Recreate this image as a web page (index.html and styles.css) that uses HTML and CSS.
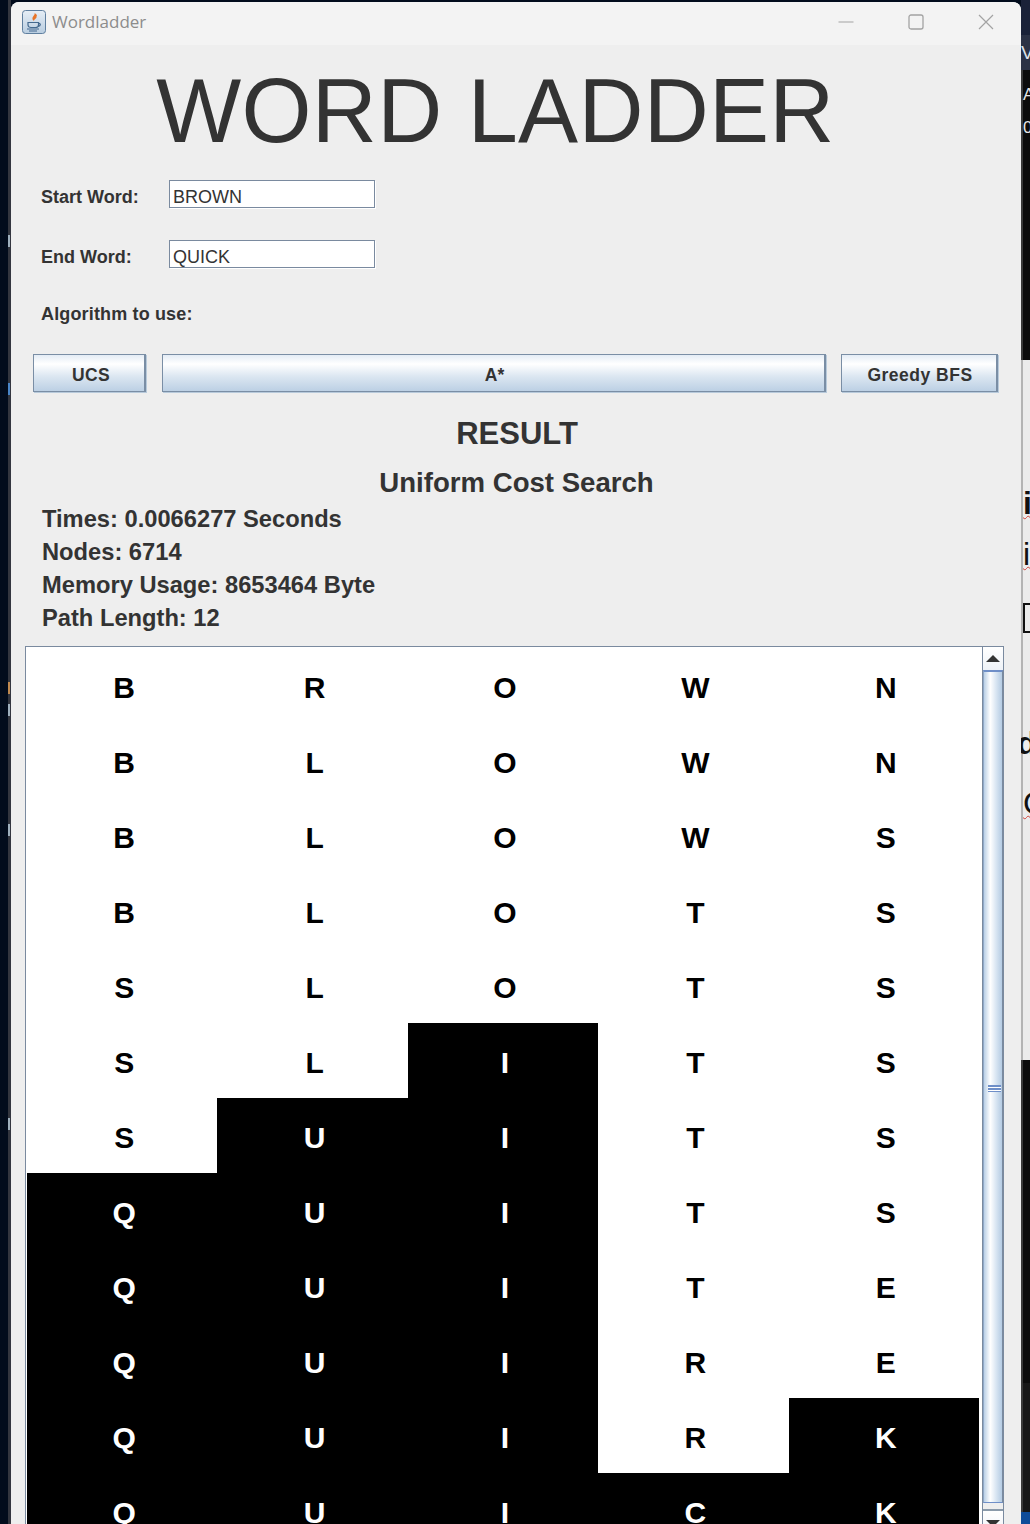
FILE: index.html
```html
<!doctype html>
<html lang="en">
<head>
  <meta charset="UTF-8">
  <title>Wordladder</title>
  <link rel="stylesheet" href="styles.css">
</head>
<body>
  <div class="desktop-left">
    <span class="edge-mark mark-a"></span>
    <span class="edge-mark mark-b"></span>
    <span class="edge-mark mark-c"></span>
    <span class="edge-mark mark-d"></span>
    <span class="edge-mark mark-e"></span>
    <span class="edge-mark mark-f"></span>
  </div>
  <div class="window">
    <div class="titlebar">
      <svg class="app-icon" width="24" height="24" viewBox="0 0 24 24">
        <defs>
          <linearGradient id="iconbg" x1="0" y1="0" x2="0" y2="1">
            <stop offset="0" stop-color="#e6eef6"/>
            <stop offset="1" stop-color="#b9cde0"/>
          </linearGradient>
        </defs>
        <rect x="0.5" y="0.5" width="23" height="23" rx="3" fill="url(#iconbg)" stroke="#5f7f9f"/>
        <path d="M12.5 3c1 2-2.500 3.500-2 6 .2 1 1 1.500 1.500 2-.2-1.500 3.500-3 2.500-5 1 0 .5-2-2-3z" fill="#e8752a"/>
        <path d="M6 12.500h10.500v2.500c0 1.500-1.500 2.500-3 2.500h-4.500c-1.500 0-3-1-3-2.500z" fill="none" stroke="#44698f" stroke-width="1.200"/>
        <path d="M16.500 13.500c2.500-.5 2.500 2.500-.5 3M5 19h12M7 21h8" fill="none" stroke="#44698f" stroke-width="1.200"/>
      </svg>
      <span class="app-name">Wordladder</span>
      <div class="window-controls">
        <svg width="16" height="16" viewBox="0 0 16 16"><path d="M0.500 8h15" stroke="#a3a3a3" fill="none"/></svg>
        <svg width="16" height="16" viewBox="0 0 16 16"><rect x="1" y="1" width="14" height="14" rx="2" stroke="#a3a3a3" stroke-width="1.300" fill="none"/></svg>
        <svg width="16" height="16" viewBox="0 0 16 16"><path d="M1 1l14 14M15 1L1 15" stroke="#a3a3a3" stroke-width="1.200" fill="none"/></svg>
      </div>
    </div>

    <div class="content">
      <h1 class="app-title">WORD LADDER</h1>

      <div class="field-row">
        <label class="field-label">Start Word:</label>
        <div class="text-input">BROWN</div>
      </div>
      <div class="field-row">
        <label class="field-label">End Word:</label>
        <div class="text-input">QUICK</div>
      </div>
      <div class="algo-label">Algorithm to use:</div>

      <div class="button-row">
        <button class="algo-btn btn-ucs">UCS</button>
        <button class="algo-btn btn-astar">A*</button>
        <button class="algo-btn btn-greedy">Greedy BFS</button>
      </div>

      <h2 class="result-title">RESULT</h2>
      <h3 class="result-algo">Uniform Cost Search</h3>
      <div class="stats">
        <div>Times: 0.0066277 Seconds</div>
        <div>Nodes: 6714</div>
        <div>Memory Usage: 8653464 Byte</div>
        <div>Path Length: 12</div>
      </div>

      <div class="path-panel">
        <div class="path-grid">
          <div class="cell">B</div><div class="cell">R</div><div class="cell">O</div><div class="cell">W</div><div class="cell">N</div>
          <div class="cell">B</div><div class="cell">L</div><div class="cell">O</div><div class="cell">W</div><div class="cell">N</div>
          <div class="cell">B</div><div class="cell">L</div><div class="cell">O</div><div class="cell">W</div><div class="cell">S</div>
          <div class="cell">B</div><div class="cell">L</div><div class="cell">O</div><div class="cell">T</div><div class="cell">S</div>
          <div class="cell">S</div><div class="cell">L</div><div class="cell">O</div><div class="cell">T</div><div class="cell">S</div>
          <div class="cell">S</div><div class="cell">L</div><div class="cell on">I</div><div class="cell">T</div><div class="cell">S</div>
          <div class="cell">S</div><div class="cell on">U</div><div class="cell on">I</div><div class="cell">T</div><div class="cell">S</div>
          <div class="cell on">Q</div><div class="cell on">U</div><div class="cell on">I</div><div class="cell">T</div><div class="cell">S</div>
          <div class="cell on">Q</div><div class="cell on">U</div><div class="cell on">I</div><div class="cell">T</div><div class="cell">E</div>
          <div class="cell on">Q</div><div class="cell on">U</div><div class="cell on">I</div><div class="cell">R</div><div class="cell">E</div>
          <div class="cell on">Q</div><div class="cell on">U</div><div class="cell on">I</div><div class="cell">R</div><div class="cell on">K</div>
          <div class="cell on">Q</div><div class="cell on">U</div><div class="cell on">I</div><div class="cell on">C</div><div class="cell on">K</div>
        </div>
        <div class="scrollbar">
          <div class="scroll-btn">
            <svg width="16" height="8" viewBox="0 0 16 8"><path d="M8 0l7 7H1z" fill="#333"/></svg>
          </div>
          <div class="scroll-thumb">
            <span class="grip"></span>
          </div>
          <div class="scroll-btn scroll-btn-down">
            <svg width="16" height="8" viewBox="0 0 16 8"><path d="M8 8L1 1h14z" fill="#333"/></svg>
          </div>
        </div>
      </div>
    </div>
  </div>
  <div class="desktop-right">
    <div class="strip-navy"></div>
    <div class="strip-slate">V</div>
    <div class="strip-black">A<br>0</div>
    <div class="strip-doc">
      <span class="doc-glyph doc-i1">i</span>
      <span class="doc-glyph doc-i2">i</span>
      <span class="doc-box"></span>
      <span class="doc-glyph doc-d">d</span>
      <span class="doc-glyph doc-c">C</span>
    </div>
    <div class="strip-dark"></div>
    <div class="strip-dark2"></div>
    <div class="strip-blue"></div>
  </div>
</body>
</html>
```

FILE: styles.css
```css
html, body {
  margin: 0;
  height: 1524px;
  overflow: hidden;
}
body {
  display: flex;
  background: #020c1c;
  font-family: 'Liberation Sans', Arial, sans-serif;
  color: #333;
}
.desktop-left {
  position: relative;
  width: 8px;
  flex: none;
  border-right: 3px solid #33363f;
}
.edge-mark {
  position: absolute;
  left: 8px;
  width: 2px;
  height: 12px;
  background: #9fb0bd;
}
.mark-a { top: 235px; }
.mark-b { top: 383px; background: #4a86c8; }
.mark-c { top: 682px; background: #c08a50; }
.mark-d { top: 704px; }
.mark-e { top: 824px; }
.mark-f { top: 1118px; }

.window {
  width: 1010px;
  flex: none;
  margin-top: 2px;
  border-radius: 8px 8px 0 0;
  overflow: hidden;
  background: #eeeeee;
}
.titlebar {
  display: flex;
  align-items: center;
  box-sizing: border-box;
  height: 43px;
  background: #f3f3f3;
  padding: 0 0 4px 11px;
}
.app-icon {
  margin-right: 6px;
}
.app-name {
  font-family: 'Open Sans', sans-serif;
  font-size: 17px;
  color: #8c8c8c;
}
.window-controls {
  margin-left: auto;
  margin-right: 27px;
  display: flex;
  gap: 54px;
}

.content {
  padding: 0 0 0 15px;
}
.app-title {
  margin: 22px 0 0;
  width: 939px;
  text-align: center;
  font-size: 90px;
  font-weight: normal;
  line-height: 88px;
  color: #333;
  letter-spacing: 0.3px;
}
.field-row {
  display: flex;
  align-items: center;
  height: 28px;
  margin: 0 0 32px 15px;
}
.app-title + .field-row {
  margin-top: 25px;
}
.field-label {
  width: 128px;
  padding-top: 7px;
  font-size: 18px;
  font-weight: bold;
}
.text-input {
  height: 26px;
  line-height: 33px;
  padding-left: 3px;
  background: #fff;
  border: 1px solid #7a8a9f;
  box-shadow: 1px 1px 0 #fff;
  font-size: 18px;
  width: 201px;
  overflow: hidden;
}
.algo-label {
  margin: -1px 0 0 15px;
  height: 28px;
  line-height: 30px;
  font-size: 18px;
  font-weight: bold;
  letter-spacing: 0.15px;
}
.button-row {
  display: flex;
  gap: 16px;
  margin: 27px 0 0 7px;
  width: 965px;
}
.algo-btn {
  height: 38px;
  padding: 4px 0 0 2px;
  border: 1px solid #7a8ea5;
  border-right-width: 2px;
  box-shadow: 1px 1px 0 #b8cadb;
  background: linear-gradient(#e4ecf5 0%, #ffffff 25%, #dbe6f1 60%, #bcd0e4 100%);
  font-family: 'Liberation Sans', Arial, sans-serif;
  font-size: 17.500px;
  font-weight: bold;
  color: #333;
}
.btn-ucs { width: 113px; flex: none; padding-left: 4px; letter-spacing: 0.4px; }
.btn-astar { flex: 1; }
.btn-greedy { width: 157px; flex: none; margin-left: -1px; letter-spacing: 0.5px; }

.result-title {
  margin: 23px 0 0;
  width: 982px;
  text-align: center;
  font-size: 31px;
  line-height: 38px;
  font-weight: bold;
}
.result-algo {
  margin: 14px 0 0;
  width: 981px;
  text-align: center;
  font-size: 27.600px;
  line-height: 32px;
  font-weight: bold;
}
.stats {
  margin: 4px 0 0 16px;
  font-size: 23.700px;
  font-weight: bold;
  line-height: 33px;
}
.path-panel {
  display: flex;
  width: 977px;
  height: 900px;
  margin: 11px 0 0 -1px;
  border: 1px solid #7a8a9f;
  background: #fff;
}
.path-grid {
  display: grid;
  grid-template-columns: repeat(5, 190.4px);
  grid-auto-rows: 75px;
  width: 952px;
  padding: 1px 0 0 1px;
  align-content: start;
}
.cell {
  display: flex;
  align-items: center;
  justify-content: center;
  padding-left: 4px;
  padding-top: 5px;
  box-sizing: border-box;
  font-size: 30px;
  font-weight: bold;
  color: #000;
}
.cell.on {
  background: #000;
  color: #fff;
}
.scrollbar {
  width: 21px;
  margin-left: 3px;
  border-left: 1px solid #7a8a9f;
  background: #eeeeee;
}
.scroll-btn {
  display: flex;
  align-items: center;
  justify-content: center;
  height: 23px;
  background: linear-gradient(#ffffff, #eef2f7);
}
.scroll-thumb {
  position: relative;
  box-sizing: border-box;
  height: 833px;
  border-top: 2px solid #6f8fc8;
  border-bottom: 1px solid #6f8fc8;
  border-left: 1px solid #8fa8c8;
  border-right: 1px solid #7a8a9f;
  background: linear-gradient(90deg, #b9cfe6 0%, #ffffff 35%, #dbe7f3 65%, #b4cbe3 100%);
}
.grip {
  position: absolute;
  left: 4px;
  top: 413px;
  width: 13px;
  height: 7px;
  background: repeating-linear-gradient(#6f8fc8 0 2px, #ffffff 2px 3px);
}
.scroll-btn-down {
  border-top: 2px solid #8a9aaa;
  margin-top: 6px;
}

.desktop-right {
  flex: 1;
  min-width: 0;
  display: flex;
  flex-direction: column;
  overflow: hidden;
}
.strip-navy { height: 35px; flex: none; background: #1a2238; }
.strip-slate {
  height: 35px;
  flex: none;
  background: #2b3245;
  color: #dfe3ea;
  font-size: 19px;
  line-height: 36px;
}
.strip-black {
  height: 290px;
  flex: none;
  background: #0c0c0c;
  color: #e6e6e6;
  font-size: 17px;
  line-height: 33px;
  padding-top: 8px;
  box-sizing: border-box;
  border-left: 2px solid #3a3a3a;
}
.strip-doc {
  position: relative;
  height: 700px;
  flex: none;
  background: #ececec;
  border-left: 2px solid #b4b4b4;
  box-sizing: border-box;
}
.doc-glyph {
  position: absolute;
  left: 0;
  font-size: 32px;
  font-weight: bold;
  color: #111;
}
.doc-i1 { top: 125px; text-decoration: underline wavy #d0453c 1px; }
.doc-i2 { top: 176px; font-weight: normal; text-decoration: underline wavy #d0453c 1px; }
.doc-d { top: 365px; left: -6px; }
.doc-c { top: 425px; font-weight: normal; text-decoration: underline wavy #d0453c 1px; }
.doc-box {
  position: absolute;
  left: 0;
  top: 243px;
  width: 12px;
  height: 26px;
  border: 2px solid #111;
}
.strip-dark { height: 323px; flex: none; background: #0b0b0b; border-left: 2px solid #3a3a3a; }
.strip-dark2 { height: 129px; flex: none; background: #171717; border-left: 2px solid #3a3a3a; }
.strip-blue { flex: 1; background: #0f4c99; }
```
